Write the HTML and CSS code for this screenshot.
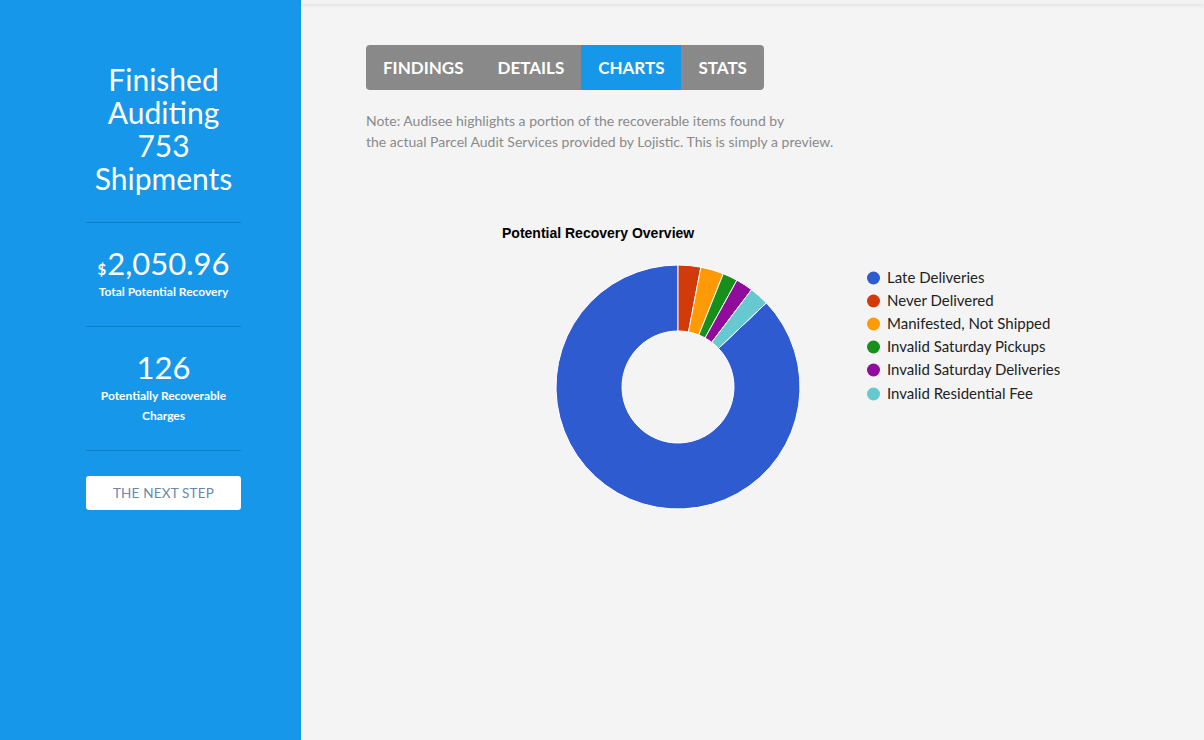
FILE: index.html
```
<!DOCTYPE html>
<html lang="en">
<head>
<meta charset="utf-8">
<title>Audisee - Charts</title>
<link rel="stylesheet" href="styles.css">
</head>
<body>
<aside class="sidebar">
  <div class="side-inner">
    <h1 class="headline">Finished<br>Auditing<br>753<br>Shipments</h1>
    <div class="stat">
      <div class="stat-num"><span class="cur">$</span>2,050.96</div>
      <div class="stat-label">Total Potential Recovery</div>
    </div>
    <div class="stat">
      <div class="stat-num">126</div>
      <div class="stat-label">Potentially Recoverable<br>Charges</div>
    </div>
    <a class="next-btn" href="#">THE NEXT STEP</a>
  </div>
</aside>
<main class="main">
  <div class="topshade"></div>
  <div class="content">
    <nav class="tabs">
      <a class="tab" href="#">FINDINGS</a>
      <a class="tab" href="#">DETAILS</a>
      <a class="tab active" href="#">CHARTS</a>
      <a class="tab" href="#">STATS</a>
    </nav>
    <p class="note">Note: Audisee highlights a portion of the recoverable items found by<br>the actual Parcel Audit Services provided by Lojistic. This is simply a preview.</p>
    <svg class="chart" width="620" height="320" viewBox="0 0 620 320">
      <text class="chart-title" x="12" y="28">Potential Recovery Overview</text>
      <g stroke="#ffffff" stroke-width="1">
        <path fill="#2f5bd0" d="M276.35 92.87 A122 122 0 1 1 188 55 L188 121 A56 56 0 1 0 228.55 138.38 Z"/>
        <path fill="#d23a0a" d="M188 55 A122 122 0 0 1 210.86 57.16 L198.49 121.99 A56 56 0 0 0 188 121 Z"/>
        <path fill="#ff9a06" d="M210.86 57.16 A122 122 0 0 1 233.31 63.72 L208.80 125.00 A56 56 0 0 0 198.49 121.99 Z"/>
        <path fill="#16901a" d="M233.31 63.72 A122 122 0 0 1 246.96 70.19 L215.06 127.97 A56 56 0 0 0 208.80 125.00 Z"/>
        <path fill="#900c9a" d="M246.96 70.19 A122 122 0 0 1 261.59 79.70 L221.78 132.34 A56 56 0 0 0 215.06 127.97 Z"/>
        <path fill="#66c9cf" d="M261.59 79.70 A122 122 0 0 1 276.35 92.87 L228.55 138.38 A56 56 0 0 0 221.78 132.34 Z"/>
      </g>
      <g class="legend">
        <circle cx="383.5" cy="68" r="6.5" fill="#2f5bd0"/>
        <text x="397" y="73">Late Deliveries</text>
        <circle cx="383.5" cy="91" r="6.5" fill="#d23a0a"/>
        <text x="397" y="96">Never Delivered</text>
        <circle cx="383.5" cy="114" r="6.5" fill="#ff9a06"/>
        <text x="397" y="119">Manifested, Not Shipped</text>
        <circle cx="383.5" cy="137" r="6.5" fill="#16901a"/>
        <text x="397" y="142">Invalid Saturday Pickups</text>
        <circle cx="383.5" cy="160" r="6.5" fill="#900c9a"/>
        <text x="397" y="165">Invalid Saturday Deliveries</text>
        <circle cx="383.5" cy="184" r="6.5" fill="#66c9cf"/>
        <text x="397" y="189">Invalid Residential Fee</text>
      </g>
    </svg>
  </div>
</main>
</body>
</html>
```

FILE: styles.css
```
* { box-sizing: border-box; }
html, body { height: 100%; }
body {
  margin: 0;
  display: flex;
  min-height: 740px;
  font-family: Lato, "Open Sans", sans-serif;
  background: #f4f4f4;
  overflow: hidden;
}
.sidebar {
  width: 301px;
  flex: 0 0 301px;
  background: #1697e9;
  color: #fff;
}
.side-inner {
  margin-left: 86px;
  width: 155px;
  padding-top: 63px;
  text-align: center;
}
.headline {
  margin: 0 0 27px;
  font-size: 30px;
  line-height: 33px;
  font-weight: 400;
}
.stat {
  border-top: 1px solid rgba(0, 40, 90, 0.22);
  padding: 23px 0 24px;
}
.stat-num {
  font-size: 31px;
  line-height: 34px;
  font-weight: 400;
}
.cur {
  font-size: 15px;
  line-height: 0;
  font-weight: 700;
  margin-right: 1px;
}
.stat-label {
  margin-top: 2px;
  font-size: 12px;
  line-height: 20px;
  font-weight: 700;
}
.stat:last-of-type {
  border-bottom: 1px solid rgba(0, 40, 90, 0.22);
  margin-bottom: 25px;
}
.next-btn {
  display: block;
  height: 34px;
  line-height: 34px;
  background: #fff;
  color: #6a88ad;
  border-radius: 3px;
  font-size: 13.5px;
  text-decoration: none;
  letter-spacing: 0.2px;
}
.main {
  flex: 1;
  background: #f4f4f4;
}
.topshade {
  height: 4px;
  background: #f2f2f2;
  box-shadow: 0 1px 4px rgba(0, 0, 0, 0.1);
}
.content {
  padding: 41px 0 0 65px;
}
.tabs {
  display: inline-flex;
  background: #898989;
  border-radius: 4px;
  overflow: hidden;
  height: 45px;
}
.tab {
  display: block;
  padding: 0 17px;
  line-height: 45px;
  font-size: 17px;
  font-weight: 700;
  color: #fff;
  text-decoration: none;
}
.tab.active { background: #1697e9; }
.note {
  margin: 20px 0 0;
  font-size: 14px;
  line-height: 21px;
  color: #8a8a8a;
}
.chart {
  display: block;
  margin: 58px 0 0 124px;
}
.chart-title {
  font-family: "Liberation Sans", Arial, sans-serif;
  font-weight: 700;
  font-size: 14px;
  fill: #000;
}
.legend text {
  font-family: Lato, "Open Sans", sans-serif;
  font-size: 15px;
  fill: #222;
}
```
